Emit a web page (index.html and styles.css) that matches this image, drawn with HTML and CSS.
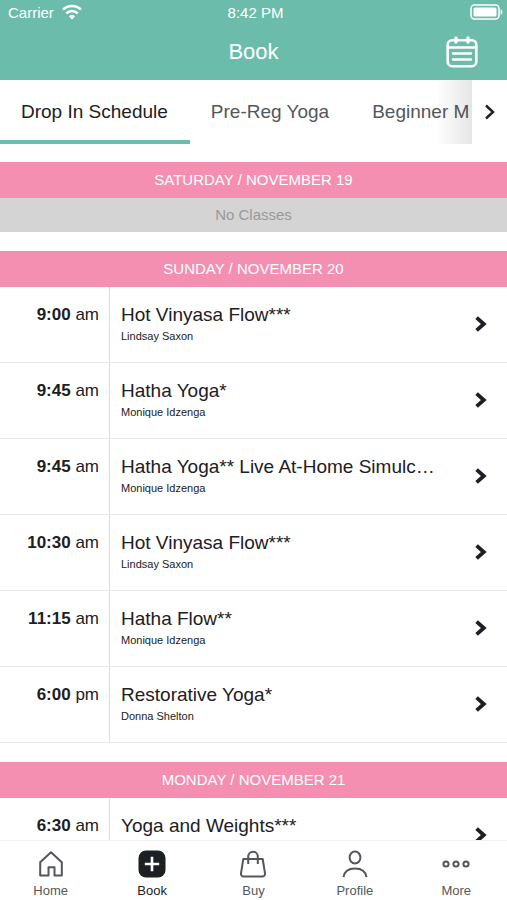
FILE: index.html
```html
<!DOCTYPE html>
<html lang="en">
<head>
<meta charset="utf-8">
<meta name="viewport" content="width=device-width, initial-scale=1">
<title>Book</title>
<link rel="stylesheet" href="styles.css">
</head>
<body>
<svg hidden>
  <symbol id="chevron" viewBox="0 0 12 16"><path d="M1.600 1.600 8.800 8l-7.200 6.400" fill="none" stroke="currentColor" stroke-width="3.8"/></symbol>
</svg>
<div class="app">
  <header class="header">
    <div class="status">
      <div class="carrier">
        <span>Carrier</span>
        <svg width="20" height="16" viewBox="0 0 20 16" fill="none" stroke="currentColor" stroke-width="2.5"><path d="M1 5.500a13 13 0 0 1 18 0M4.300 9.300a8.300 8.300 0 0 1 11.400 0"/><path d="M10 15.600 6.900 12.400a4.500 4.500 0 0 1 6.200 0z" fill="currentColor" stroke="none"/></svg>
      </div>
      <span>8:42 PM</span>
      <div class="battery">
        <svg width="33" height="16" viewBox="0 0 33 16"><rect x="1" y="1" width="28" height="14" rx="3.5" fill="none" stroke="currentColor" stroke-width="1.5"/><rect x="3.5" y="3.5" width="23" height="9" rx="1.5" fill="currentColor"/><path d="M30.6 5.2c2.4.8 2.4 4.8 0 5.600z" fill="currentColor"/></svg>
      </div>
    </div>
    <div class="titlebar">
      <h1 class="title">Book</h1>
      <button class="calendar" type="button" aria-label="Calendar">
        <svg width="32" height="32" viewBox="0 0 32 32" fill="none" stroke="currentColor" stroke-width="2.6" stroke-linecap="round"><rect x="1.700" y="4.200" width="28.600" height="26" rx="4.500"/><path d="M2 11.500h28"/><path d="M10 2v4M22 2v4" stroke-width="3.400"/><path d="M7 17.500h18M7 23.500h18" stroke-width="2.400"/></svg>
      </button>
    </div>
  </header>

  <nav class="tabs" aria-label="Schedules">
    <div class="tab-list">
      <a class="tab active" href="#drop-in">Drop In Schedule</a>
      <a class="tab" href="#pre-reg">Pre-Reg Yoga</a>
      <a class="tab" href="#beginner">Beginner M</a>
    </div>
    <button class="tabs-next" type="button" aria-label="More schedules">
      <svg width="12" height="16" viewBox="0 0 12 16" fill="none" stroke="currentColor" stroke-width="2.400"><path d="M2 1.500 9 8l-7 6.500"/></svg>
    </button>
  </nav>

  <main class="schedule">
    <section>
      <h2 class="day">SATURDAY / NOVEMBER 19</h2>
      <p class="empty">No Classes</p>
    </section>
    <section>
      <h2 class="day">SUNDAY / NOVEMBER 20</h2>
      <a class="row" href="#c1"><span class="time"><b>9:00</b> am</span><span class="info"><span class="name">Hot Vinyasa Flow***</span><span class="teacher">Lindsay Saxon</span></span><svg class="go"><use href="#chevron"/></svg></a>
      <a class="row" href="#c2"><span class="time"><b>9:45</b> am</span><span class="info"><span class="name">Hatha Yoga*</span><span class="teacher">Monique Idzenga</span></span><svg class="go"><use href="#chevron"/></svg></a>
      <a class="row" href="#c3"><span class="time"><b>9:45</b> am</span><span class="info"><span class="name">Hatha Yoga** Live At-Home Simulc…</span><span class="teacher">Monique Idzenga</span></span><svg class="go"><use href="#chevron"/></svg></a>
      <a class="row" href="#c4"><span class="time"><b>10:30</b> am</span><span class="info"><span class="name">Hot Vinyasa Flow***</span><span class="teacher">Lindsay Saxon</span></span><svg class="go"><use href="#chevron"/></svg></a>
      <a class="row" href="#c5"><span class="time"><b>11:15</b> am</span><span class="info"><span class="name">Hatha Flow**</span><span class="teacher">Monique Idzenga</span></span><svg class="go"><use href="#chevron"/></svg></a>
      <a class="row" href="#c6"><span class="time"><b>6:00</b> pm</span><span class="info"><span class="name">Restorative Yoga*</span><span class="teacher">Donna Shelton</span></span><svg class="go"><use href="#chevron"/></svg></a>
    </section>
    <section>
      <h2 class="day">MONDAY / NOVEMBER 21</h2>
      <a class="row" href="#c7"><span class="time"><b>6:30</b> am</span><span class="info"><span class="name">Yoga and Weights***</span></span><svg class="go"><use href="#chevron"/></svg></a>
    </section>
  </main>

  <nav class="bottom" aria-label="Main">
    <a class="item" href="#home">
      <svg class="icon" viewBox="0 0 28 28"><path d="M3.200 12.200 14 2.200l10.800 10V25.400h-7.300v-8.200h-6v8.200H3.200z"/></svg>
      <span>Home</span>
    </a>
    <a class="item current" href="#book" aria-current="page">
      <svg class="icon" viewBox="0 0 28 28"><rect x=".5" y=".5" width="27" height="27" rx="7.500" fill="#1c2024" stroke="none"/><path d="M14 6.800v14.400M6.800 14h14.400" stroke="#fff" stroke-width="2.600"/></svg>
      <span>Book</span>
    </a>
    <a class="item" href="#buy">
      <svg class="icon" viewBox="0 0 28 28"><path d="M4.300 9h19.400l2.300 14.300a2.700 2.700 0 0 1-2.700 3.200H4.700A2.700 2.700 0 0 1 2 23.300z"/><path d="M9.200 14V7a4.800 5.300 0 0 1 9.600 0v7"/></svg>
      <span>Buy</span>
    </a>
    <a class="item" href="#profile">
      <svg class="icon" viewBox="0 0 28 28"><ellipse cx="14" cy="7.500" rx="5.400" ry="6"/><path d="M2.500 27.200c.8-5.900 5.300-8.700 11.500-8.700s10.700 2.800 11.500 8.700"/></svg>
      <span>Profile</span>
    </a>
    <a class="item" href="#more">
      <svg class="icon" viewBox="0 0 28 28"><circle cx="4" cy="14" r="2.600"/><circle cx="14" cy="14" r="2.600"/><circle cx="24" cy="14" r="2.600"/></svg>
      <span>More</span>
    </a>
  </nav>
</div>
</body>
</html>
```

FILE: styles.css
```css
* { box-sizing: border-box; }

body {
  margin: 0;
  font-family: "Liberation Sans", Arial, sans-serif;
  color: #1c2024;
  background: #fff;
}

a { color: inherit; text-decoration: none; }

button {
  padding: 0;
  border: 0;
  background: none;
  color: inherit;
  font: inherit;
}

h1, h2, p { margin: 0; font-weight: 400; }

svg { display: block; }
svg[hidden] { display: none; }

.app {
  display: flex;
  flex-direction: column;
  height: 100vh;
}

.header {
  flex: none;
  background: #6cbcab;
  color: #fff;
}

.status {
  display: grid;
  grid-template-columns: 1fr auto 1fr;
  align-items: center;
  height: 24px;
  padding: 0 4px 0 8px;
  font-size: 15px;
}

.carrier { display: flex; align-items: center; gap: 8px; }
.battery { display: flex; justify-content: flex-end; }

.titlebar {
  display: grid;
  grid-template-columns: 1fr auto 1fr;
  align-items: center;
  height: 56px;
  padding: 0 29px;
}

.title { grid-column: 2; font-size: 22px; }
.calendar { justify-self: end; }

.tabs {
  display: flex;
  flex: none;
  height: 64px;
}

.tab-list {
  position: relative;
  display: flex;
  flex: 1;
  min-width: 0;
  overflow: hidden;
}

.tab-list::after {
  content: "";
  position: absolute;
  inset: 0 0 0 auto;
  width: 36px;
  background: linear-gradient(to right, rgba(0, 0, 0, 0), rgba(0, 0, 0, 0.1));
}

.tab {
  flex: none;
  padding: 0 22px 0 21px;
  border-bottom: 4px solid transparent;
  font-size: 19px;
  line-height: 64px;
  color: #53575b;
  white-space: nowrap;
}

.tab.active { border-color: #6cbcab; color: #1c2024; }

.tabs-next {
  display: flex;
  align-items: center;
  justify-content: center;
  width: 35px;
}

.schedule {
  display: flex;
  flex: 1;
  flex-direction: column;
  gap: 19px;
  min-height: 0;
  padding-top: 18px;
  overflow: hidden;
}

.schedule section { flex: none; }

.day, .empty {
  font-size: 15px;
  line-height: 36px;
  text-align: center;
}

.day { background: #f48fb1; color: #fff; }
.empty { background: #d4d4d4; color: #999; line-height: 34px; }

.row {
  display: flex;
  height: 76px;
  border-bottom: 1px solid #e8eaec;
}

.time {
  flex: none;
  width: 110px;
  padding: 17px 10px 0 0;
  border-right: 1px solid #dcdfe2;
  font-size: 17px;
  line-height: 22px;
  text-align: right;
}

.info {
  display: flex;
  flex: 1;
  flex-direction: column;
  gap: 3px;
  min-width: 0;
  padding: 17px 0 0 11px;
}

.name {
  overflow: hidden;
  font-size: 19px;
  line-height: 22px;
  text-overflow: ellipsis;
  white-space: nowrap;
}

.teacher { font-size: 11px; line-height: 14px; }

.go {
  flex: none;
  align-self: center;
  width: 12px;
  height: 16px;
  margin: 0 20px 2px 24px;
}

.bottom {
  display: grid;
  flex: none;
  grid-template-columns: repeat(5, 1fr);
  height: 60px;
  border-top: 1px solid #f0f1f2;
  background: #fff;
}

.item {
  display: flex;
  flex-direction: column;
  align-items: center;
  gap: 5px;
  padding-top: 9px;
  font-size: 13px;
  line-height: 16px;
  color: #53575b;
}

.item.current { color: #1c2024; }

.icon {
  width: 28px;
  height: 28px;
  fill: none;
  stroke: #53575b;
  stroke-width: 2;
  stroke-linejoin: round;
}
```
